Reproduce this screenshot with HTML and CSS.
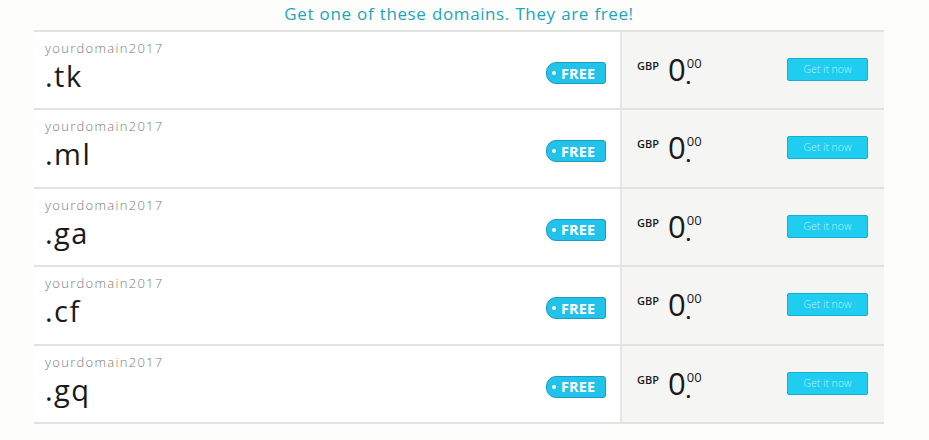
FILE: index.html
```html
<!DOCTYPE html>
<html>
<head>
<meta charset="utf-8">
<link rel="stylesheet" href="styles.css">
</head>
<body>
<div class="wrap">
  <h1 class="title">Get one of these domains. They are free!</h1>
  <div class="table">
    <div class="row">
      <div class="name"><div class="sub">yourdomain2017</div><div class="tld">.tk</div></div>
      <div class="badge-cell"><span class="badge"><span class="dot"></span>FREE</span></div>
      <div class="price"><span class="cur">GBP</span><span class="int">0</span><span class="dec"><span class="cents">00</span><span class="pt">.</span></span></div>
      <div class="btn-cell"><span class="btn">Get it now</span></div>
    </div>
    <div class="row">
      <div class="name"><div class="sub">yourdomain2017</div><div class="tld">.ml</div></div>
      <div class="badge-cell"><span class="badge"><span class="dot"></span>FREE</span></div>
      <div class="price"><span class="cur">GBP</span><span class="int">0</span><span class="dec"><span class="cents">00</span><span class="pt">.</span></span></div>
      <div class="btn-cell"><span class="btn">Get it now</span></div>
    </div>
    <div class="row">
      <div class="name"><div class="sub">yourdomain2017</div><div class="tld">.ga</div></div>
      <div class="badge-cell"><span class="badge"><span class="dot"></span>FREE</span></div>
      <div class="price"><span class="cur">GBP</span><span class="int">0</span><span class="dec"><span class="cents">00</span><span class="pt">.</span></span></div>
      <div class="btn-cell"><span class="btn">Get it now</span></div>
    </div>
    <div class="row">
      <div class="name"><div class="sub">yourdomain2017</div><div class="tld">.cf</div></div>
      <div class="badge-cell"><span class="badge"><span class="dot"></span>FREE</span></div>
      <div class="price"><span class="cur">GBP</span><span class="int">0</span><span class="dec"><span class="cents">00</span><span class="pt">.</span></span></div>
      <div class="btn-cell"><span class="btn">Get it now</span></div>
    </div>
    <div class="row">
      <div class="name"><div class="sub">yourdomain2017</div><div class="tld">.gq</div></div>
      <div class="badge-cell"><span class="badge"><span class="dot"></span>FREE</span></div>
      <div class="price"><span class="cur">GBP</span><span class="int">0</span><span class="dec"><span class="cents">00</span><span class="pt">.</span></span></div>
      <div class="btn-cell"><span class="btn">Get it now</span></div>
    </div>
  </div>
</div>
</body>
</html>
```
FILE: styles.css
```css
html, body {
  margin: 0;
  padding: 0;
  background: #fdfdfb;
  font-family: "Open Sans", "Liberation Sans", sans-serif;
}
.wrap {
  width: 850px;
  margin-left: 34px;
}
.title {
  margin: 0;
  height: 30px;
  line-height: 27px;
  font-size: 17px;
  font-weight: 400;
  color: #1aa6bb;
  text-align: center;
  letter-spacing: 0.6px;
  word-spacing: 0.5px;
}
.table {
  border-top: 2px solid #e2e2e0;
}
.row {
  display: grid;
  grid-template-columns: 500px 88px 150px 112px;
  height: 76.4px;
  border-bottom: 2px solid #e2e2e0;
  background: #ffffff;
}
.name {
  padding: 8px 0 0 11px;
}
.sub {
  font-size: 13px;
  color: #7a7a7a;
  font-weight: 300;
  line-height: 17px;
  letter-spacing: 1.3px;
}
.tld {
  font-size: 29px;
  color: #1a1a1a;
  line-height: 34px;
  letter-spacing: 1.5px;
  margin-top: 2px;
}
.badge-cell {
  padding-top: 26px;
  padding-left: 12px;
  border-right: 2px solid #e6e6e4;
}
.badge {
  display: inline-flex;
  align-items: center;
  width: 60px;
  height: 22px;
  box-sizing: border-box;
  background: #21c3ea;
  border: 1px solid #1a9dc4;
  border-radius: 10px 3px 3px 10px;
  color: #ffffff;
  font-weight: 700;
  font-size: 14.5px;
  letter-spacing: 0.1px;
  padding-left: 5px;
}
.dot {
  width: 4px;
  height: 4px;
  border-radius: 50%;
  background: #ffffff;
  margin-right: 5px;
}
.price {
  background: #f5f5f3;
  padding: 20px 0 0 15px;
  display: flex;
  align-items: flex-start;
  color: #1a1a1a;
}
.cur {
  font-size: 11px;
  font-weight: 600;
  margin-top: 6px;
  margin-right: 9px;
}
.int {
  font-size: 31px;
  line-height: 34px;
  font-weight: 400;
}
.dec {
  display: flex;
  flex-direction: column;
  margin-left: 1px;
}
.cents {
  font-size: 13px;
  line-height: 14px;
  margin-top: 4px;
}
.pt {
  font-size: 18px;
  line-height: 14px;
  font-weight: 700;
  margin-left: -1px;
}
.btn-cell {
  background: #f5f5f3;
  padding-top: 24px;
  padding-left: 15px;
}
.btn {
  display: inline-block;
  width: 81px;
  height: 23px;
  box-sizing: border-box;
  background: #1ecdf0;
  border: 1px solid #14aed6;
  border-radius: 2px;
  color: #bff0fb;
  font-size: 10.5px;
  line-height: 21px;
  text-align: center;
  font-weight: 300;
}
```
